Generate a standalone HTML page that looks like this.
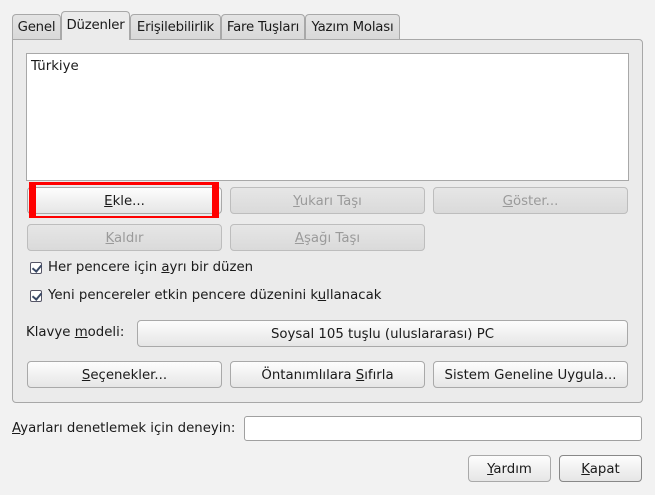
<!DOCTYPE html>
<html><head><meta charset="utf-8"><style>
*{box-sizing:border-box;margin:0;padding:0}
body{width:655px;height:495px;background:#f2f2f2;font-family:"DejaVu Sans","Liberation Sans",sans-serif;font-size:13.3px;color:#1a1a1a;position:relative;overflow:hidden}
.a{position:absolute}
.tab{position:absolute;top:14px;height:26px;border:1px solid #a8a8a8;border-bottom:none;border-radius:4px 4px 0 0;background:linear-gradient(#e4e4e4,#d8d8d8);text-align:center;line-height:25px;white-space:nowrap;letter-spacing:-0.2px}
.tab.act{top:11px;height:29px;background:#ebebeb;z-index:2;line-height:27px}
.panel{position:absolute;left:12px;top:39px;width:631px;height:364px;border:1px solid #a8a8a8;border-radius:0 4px 4px 4px;background:#ebebeb}
.btn{position:absolute;height:27px;border:1px solid #a9a9a9;border-radius:4px;background:linear-gradient(#fdfdfd,#f0f0f0 55%,#e6e6e6);text-align:center;line-height:27px;white-space:nowrap}
.dis{color:#9a9a9a;background:linear-gradient(#e6e6e6,#dadada);border-color:#bdbdbd}
.cb{position:absolute;width:12px;height:12px;border:1px solid #556;border-radius:2px;background:#fff}
.cb:after{content:"";position:absolute;left:3px;top:0px;width:4px;height:7px;border:solid #3a4a66;border-width:0 2px 2px 0;transform:rotate(40deg)}
u{text-decoration:underline}
</style></head><body>
<div class="tab" style="left:12px;width:49px">Genel</div>
<div class="tab act" style="left:61px;width:69px">Düzenler</div>
<div class="tab" style="left:130px;width:91px">Erişilebilirlik</div>
<div class="tab" style="left:221px;width:84px">Fare Tuşları</div>
<div class="tab" style="left:305px;width:95px">Yazım Molası</div>
<div class="panel"></div>
<div class="a" style="left:26px;top:53px;width:603px;height:128px;background:#fff;border:1px solid #a8a8a8"></div>
<div class="a" style="left:31px;top:59px">Türkiye</div>

<div class="btn" style="left:27px;top:187px;width:195px"><u>E</u>kle...</div>
<div class="a" style="left:29px;top:182px;width:190px;height:36px;border:solid #f00;border-width:3px 7px 2px 7px"></div>
<div class="btn dis" style="left:230px;top:187px;width:195px"><u>Y</u>ukarı Taşı</div>
<div class="btn dis" style="left:433px;top:187px;width:195px"><u>G</u>öster...</div>
<div class="btn dis" style="left:27px;top:224px;width:195px"><u>K</u>aldır</div>
<div class="btn dis" style="left:230px;top:224px;width:195px"><u>A</u>şağı Taşı</div>

<div class="cb" style="left:30px;top:262px"></div>
<div class="a" style="left:48px;top:260px">Her pencere için <u>a</u>yrı bir düzen</div>
<div class="cb" style="left:30px;top:290px"></div>
<div class="a" style="left:48px;top:288px">Yeni pencereler etkin pencere düzenini k<u>u</u>llanacak</div>

<div class="a" style="left:26px;top:325px">Klavye <u>m</u>odeli:</div>
<div class="btn" style="left:137px;top:320px;width:491px">Soysal 105 tuşlu (uluslararası) PC</div>

<div class="btn" style="left:27px;top:361px;width:195px"><u>S</u>eçenekler...</div>
<div class="btn" style="left:230px;top:361px;width:195px">Öntanımlılara <u>S</u>ıfırla</div>
<div class="btn" style="left:433px;top:361px;width:195px">Sistem Geneline Uygula...</div>

<div class="a" style="left:12px;top:421px"><u>A</u>yarları denetlemek için deneyin:</div>
<div class="a" style="left:244px;top:416px;width:398px;height:25px;background:#fff;border:1px solid #a0a0a0;border-radius:3px"></div>

<div class="btn" style="left:468px;top:455px;width:83px"><u>Y</u>ardım</div>
<div class="btn" style="left:559px;top:455px;width:83px;border-color:#888"><u>K</u>apat</div>
</body></html>
